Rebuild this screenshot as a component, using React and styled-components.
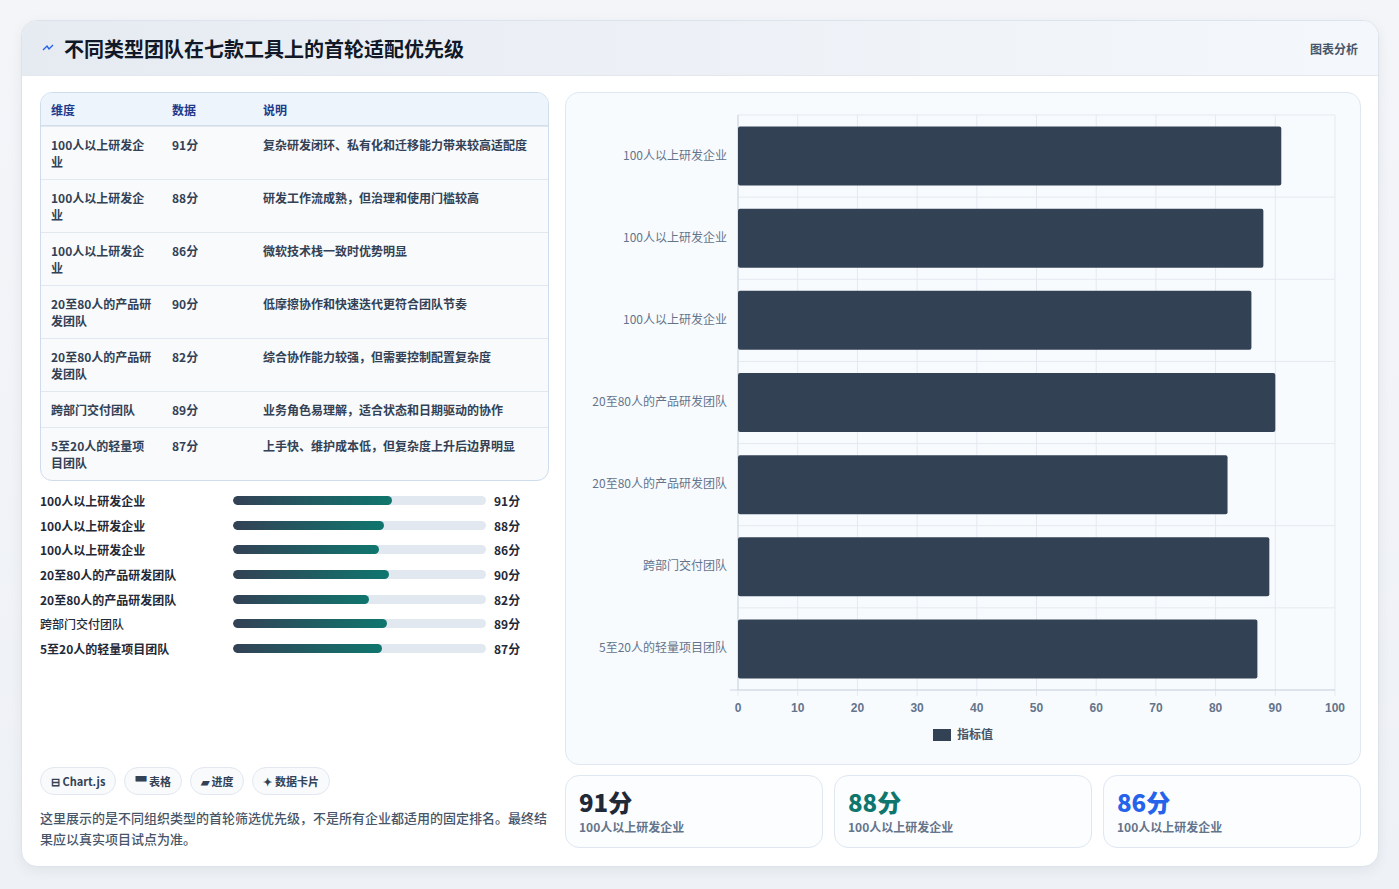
import React from 'react';
import styled, { createGlobalStyle } from 'styled-components';

const rows = [
  { name: '100人以上研发企业', v: 91, note: '复杂研发闭环、私有化和迁移能力带来较高适配度' },
  { name: '100人以上研发企业', v: 88, note: '研发工作流成熟，但治理和使用门槛较高' },
  { name: '100人以上研发企业', v: 86, note: '微软技术栈一致时优势明显' },
  { name: '20至80人的产品研发团队', v: 90, note: '低摩擦协作和快速迭代更符合团队节奏' },
  { name: '20至80人的产品研发团队', v: 82, note: '综合协作能力较强，但需要控制配置复杂度' },
  { name: '跨部门交付团队', v: 89, note: '业务角色易理解，适合状态和日期驱动的协作' },
  { name: '5至20人的轻量项目团队', v: 87, note: '上手快、维护成本低，但复杂度上升后边界明显' },
];

const Global = createGlobalStyle`
  body { margin: 0; background: #f1f4f8; font-family: "Noto Sans CJK SC", "Noto Sans", sans-serif; color: #1e293b; }
`;

const Page = styled.div`
  padding: 20px 20px 22px 21px;
  height: 889px;
  box-sizing: border-box;
  background: linear-gradient(#f3f5f9, #eef1f5);
`;

const Card = styled.div`
  background: #fff;
  border: 1px solid #dde3ec;
  border-radius: 16px;
  height: 100%;
  box-sizing: border-box;
  overflow: hidden;
  display: flex;
  flex-direction: column;
  box-shadow: 0 4px 14px rgba(15, 23, 42, 0.06);
`;

const Header = styled.div`
  height: 54px;
  display: flex;
  align-items: center;
  justify-content: space-between;
  padding: 0 20px 0 20px;
  background: linear-gradient(90deg, #e6ebf2, #f4f7fb);
  border-bottom: 1px solid #e3e8ef;
`;

const Title = styled.h1`
  margin: 0;
  font-size: 20px;
  font-weight: 700;
  color: #111827;
  display: flex;
  align-items: center;
  gap: 10px;
`;

const HeaderTag = styled.span`
  font-size: 12px;
  color: #475569;
  font-weight: 600;
`;

const Body = styled.div`
  flex: 1;
  display: grid;
  grid-template-columns: 509px 796px;
  gap: 16px;
  padding: 16px 18px 17px 18px;
  min-height: 0;
`;

const Left = styled.div`
  display: flex;
  flex-direction: column;
`;

const Table = styled.table`
  width: 100%;
  border-collapse: separate;
  border-spacing: 0;
  border: 1px solid #cfdcec;
  border-radius: 12px;
  overflow: hidden;
  font-size: 12px;
  background: #f8fafc;
`;

const Th = styled.th`
  text-align: left;
  font-weight: 600;
  color: #1e3a8a;
  background: #eef4fc;
  height: 32px;
  padding: 0 10px;
  border-bottom: 1px solid #d3deea;
  width: ${p => p.w || 'auto'};
`;

const Td = styled.td`
  vertical-align: top;
  padding: 9px 10px ${p => (p.single ? '8px' : '9px')};
  line-height: 17px;
  color: #334155;
  font-weight: ${p => (p.bold ? 600 : 500)};
  border-top: ${p => (p.first ? 'none' : '1px solid #e2e8f0')};
`;

const Bars = styled.div`
  margin-top: 11px;
  display: flex;
  flex-direction: column;
  gap: 7px;
`;

const BarRow = styled.div`
  display: grid;
  grid-template-columns: 185px 253px 1fr;
  align-items: center;
  gap: 0 8px;
  height: 17.6px;
  font-size: 12px;
  font-weight: 700;
  color: #1f2937;
`;

const Track = styled.div`
  height: 9px;
  border-radius: 5px;
  background: #e2e8f0;
  overflow: hidden;
`;

const Fill = styled.div`
  height: 100%;
  border-radius: 5px;
  background: linear-gradient(90deg, #334155, #0f766e);
`;

const Foot = styled.div`
  margin-top: auto;
`;

const Chips = styled.div`
  display: flex;
  gap: 8px;
`;

const Chip = styled.span`
  font-size: 11px;
  font-weight: 600;
  color: #334155;
  border: 1px solid #e2e8f0;
  background: #f8fafc;
  border-radius: 14px;
  padding: 5px 10px;
`;

const Note = styled.p`
  margin: 12px 0 0;
  font-size: 13px;
  line-height: 21px;
  color: #475569;
  font-weight: 500;
`;

const Right = styled.div`
  display: flex;
  flex-direction: column;
  gap: 10px;
`;

const ChartBox = styled.div`
  height: 671px;
  border: 1px solid #dfe7f1;
  border-radius: 14px;
  background: #f8fbfe;
  overflow: hidden;
`;

const Stats = styled.div`
  display: grid;
  grid-template-columns: repeat(3, 1fr);
  gap: 11px;
`;

const Stat = styled.div`
  height: 73px;
  box-sizing: border-box;
  border: 1px solid #dfe7f1;
  border-radius: 14px;
  background: #fbfdff;
  padding: 10px 13px;
`;

const StatNum = styled.div`
  font-size: 24px;
  font-weight: 800;
  line-height: 32px;
  color: ${p => p.c};
`;

const StatLabel = styled.div`
  font-size: 12px;
  font-weight: 600;
  color: #64748b;
`;

function Chart() {
  const L = 172, R = 769, T = 22, B = 597;
  const band = (B - T) / rows.length;
  const sx = v => L + ((R - L) * v) / 100;
  return (
    <svg width="795" height="671" style={{ display: 'block' }}>
      {Array.from({ length: 11 }, (_, i) => (
        <g key={i}>
          <line x1={sx(i * 10)} x2={sx(i * 10)} y1={T} y2={B + 6} stroke="#e5e9ef" />
          <text x={sx(i * 10)} y={B + 22} textAnchor="middle" fontSize="12" fill="#64748b" fontFamily="Liberation Sans, sans-serif" fontWeight="600">{i * 10}</text>
        </g>
      ))}
      {rows.map((r, i) => (
        <line key={'h' + i} x1={L} x2={R} y1={T + band * (i + 1)} y2={T + band * (i + 1)} stroke="#e5e9ef" />
      ))}
      <line x1={L} x2={R} y1={T} y2={T} stroke="#e5e9ef" />
      <line x1={L - 8} x2={R} y1={B} y2={B} stroke="#cbd5e1" />
      <line x1={L} x2={L} y1={T} y2={B} stroke="#cbd5e1" />
      {rows.map((r, i) => {
        const y = T + band * i + (band - 59) / 2;
        return (
          <g key={'b' + i}>
            <rect x={L} y={y} width={sx(r.v) - L} height="59" rx="2" fill="#334155" />
            <text x={L - 11} y={y + 33} textAnchor="end" fontSize="12" fill="#64748b" fontFamily="Noto Sans CJK SC, sans-serif">{r.name}</text>
          </g>
        );
      })}
      <rect x="367" y="636" width="18" height="12" fill="#334155" />
      <text x="391" y="646" fontSize="12" fill="#475569" fontFamily="Noto Sans CJK SC, sans-serif" fontWeight="600">指标值</text>
    </svg>
  );
}

export default function App() {
  return (
    <Page>
      <Global />
      <Card>
        <Header>
          <Title>
            <svg width="12" height="8" viewBox="0 0 12 8"><path d="M1 6 L5 2 L7 5 L11 1" stroke="#2563eb" strokeWidth="1.4" fill="none" /></svg>
            不同类型团队在七款工具上的首轮适配优先级
          </Title>
          <HeaderTag>图表分析</HeaderTag>
        </Header>
        <Body>
          <Left>
            <Table>
              <thead>
                <tr><Th w="101px">维度</Th><Th w="71px">数据</Th><Th>说明</Th></tr>
              </thead>
              <tbody>
                {rows.map((r, i) => (
                  <tr key={i}>
                    <Td bold first={false} single={i === 5}>{r.name}</Td>
                    <Td bold>{r.v}分</Td>
                    <Td bold>{r.note}</Td>
                  </tr>
                ))}
              </tbody>
            </Table>
            <Bars>
              {rows.map((r, i) => (
                <BarRow key={i}>
                  <span style={{ fontWeight: i === 5 ? 500 : 700 }}>{r.name}</span>
                  <Track><Fill style={{ width: `${(r.v - 30) / 0.97}%` }} /></Track>
                  <span>{r.v}分</span>
                </BarRow>
              ))}
            </Bars>
            <Foot>
              <Chips>
                <Chip>⊟ Chart.js</Chip>
                <Chip>▀ 表格</Chip>
                <Chip>▰ 进度</Chip>
                <Chip>✦ 数据卡片</Chip>
              </Chips>
              <Note>这里展示的是不同组织类型的首轮筛选优先级，不是所有企业都适用的固定排名。最终结果应以真实项目试点为准。</Note>
            </Foot>
          </Left>
          <Right>
            <ChartBox><Chart /></ChartBox>
            <Stats>
              <Stat><StatNum c="#1f2937">91分</StatNum><StatLabel>100人以上研发企业</StatLabel></Stat>
              <Stat><StatNum c="#0f766e">88分</StatNum><StatLabel>100人以上研发企业</StatLabel></Stat>
              <Stat><StatNum c="#2563eb">86分</StatNum><StatLabel>100人以上研发企业</StatLabel></Stat>
            </Stats>
          </Right>
        </Body>
      </Card>
    </Page>
  );
}
